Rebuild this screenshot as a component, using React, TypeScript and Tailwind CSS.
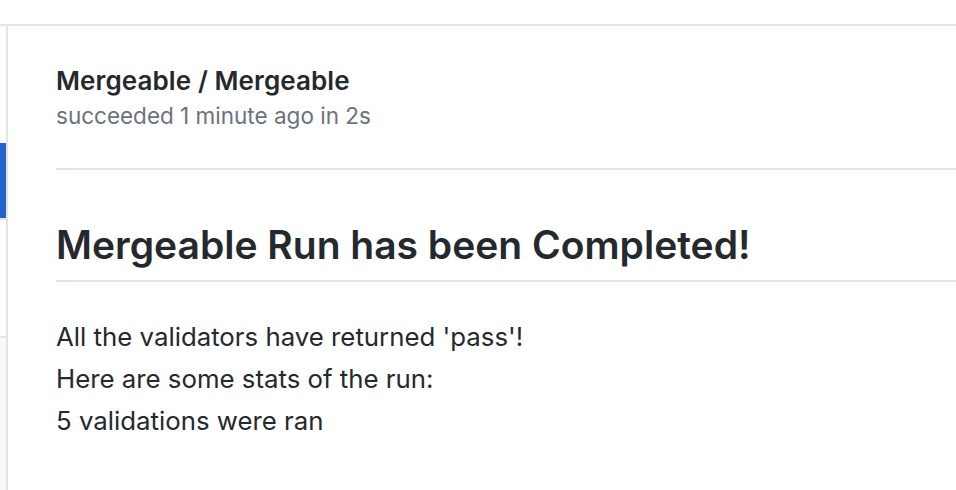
import React from 'react';

const lines = [
  "All the validators have returned 'pass'!",
  'Here are some stats of the run:',
  '5 validations were ran',
];

export default function App() {
  return (
    <div className="w-[956px] h-[490px] bg-white overflow-hidden flex flex-col text-[#24292e] font-['Inter',sans-serif]">
      <div className="h-[26px] shrink-0 border-b-2 border-[#e1e4e8]" />
      <div className="flex flex-1">
        {/* left rail */}
        <aside className="w-2 shrink-0 border-r-2 border-[#e1e4e8] flex flex-col">
          <div className="h-[117px]" />
          <div className="h-[75px] bg-[#2663cd]" />
          <div className="h-[118px] border-t-2 border-[#e1e4e8]" />
          <div className="flex-1 border-t-2 border-[#e1e4e8] bg-[#f8f9fb]" />
        </aside>

        <main className="flex-1 pl-12">
          <div className="pt-[40px] pb-[39px] border-b-2 border-[#e1e4e8]">
            <div className="text-[26px] leading-[30px] font-semibold tracking-[0.1px]">Mergeable / Mergeable</div>
            <div className="mt-[7px] text-[22.5px] leading-[26px] text-[#6a737d]">succeeded 1 minute ago in 2s</div>
          </div>

          <h2 className="mt-[51px] pb-[11px] border-b-2 border-[#e1e4e8] text-[39px] leading-[48px] font-semibold">
            Mergeable Run has been Completed!
          </h2>
          <div className="mt-[34px] text-[25.8px] leading-[42px]">
            {lines.map((l) => (
              <div key={l}>{l}</div>
            ))}
          </div>
        </main>
      </div>
    </div>
  );
}
